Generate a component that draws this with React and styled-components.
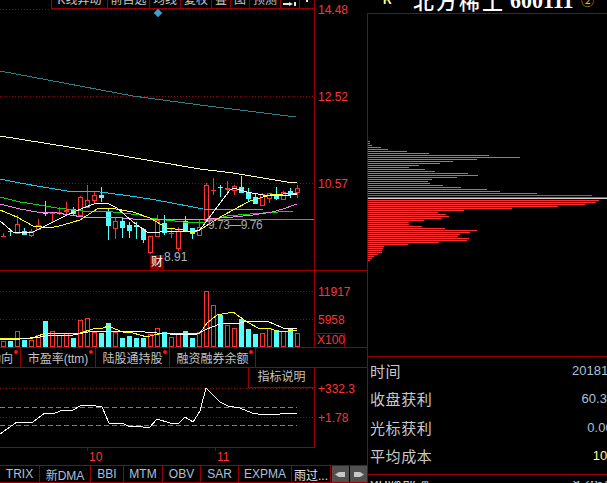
import React from 'react'
import styled, { createGlobalStyle } from 'styled-components'

const LINE = '#990000'
const RED = '#ff3232'
const CYAN = '#54ffff'
const SANS = `"Liberation Sans", "Noto Sans CJK SC", sans-serif`

const GlobalStyle = createGlobalStyle`
  html, body {
    margin: 0;
    background: #000;
    overflow: hidden;
  }
`

const Screen = styled.div`
  display: flex;
  width: 607px;
  height: 483px;
  background: #000;
  overflow: hidden;
  font-family: ${SANS};
`

const LeftColumn = styled.div`
  display: flex;
  flex-direction: column;
  flex: none;
  width: 367px;
`

const PriceRow = styled.div`
  display: flex;
  flex: none;
  height: 271px;
  border-bottom: 1px solid ${LINE};
  box-sizing: border-box;
`

const VolumeRow = styled.div`
  display: flex;
  flex: none;
  height: 77px;
  border-bottom: 1px solid ${LINE};
  box-sizing: border-box;
`

const IndicatorRow = styled.div`
  display: flex;
  flex: none;
  height: 80px;
`

const ChartColumn = styled.div`
  position: relative;
  flex: none;
  width: 315px;
  border-right: 1px solid ${LINE};
  box-sizing: border-box;
  ${(p) => p.$closed && `border-bottom: 1px solid ${LINE};`}
`

const Chart = styled.svg`
  display: block;
`

const Toolbar = styled.div`
  display: flex;
  width: 263px;
  height: 9px;
  margin-left: 51px;
  border-left: 1px solid ${LINE};
  border-bottom: 1px solid ${LINE};
  box-sizing: border-box;
`

const ToolItem = styled.div`
  display: flex;
  align-items: flex-end;
  justify-content: center;
  flex: none;
  width: ${(p) => p.$w}px;
  padding-bottom: 1px;
  border-right: 1px solid ${LINE};
  box-sizing: border-box;
  overflow: hidden;
  color: #c8c8c8;
  font-size: 12px;
  line-height: 14px;
  white-space: nowrap;
`

const Axis = styled.div`
  display: flex;
  flex-direction: column;
  flex: 1;
  padding: ${(p) => p.$top}px 0 0 3px;
`

const AxisLabel = styled.div`
  flex: none;
  height: ${(p) => p.$h}px;
  color: ${RED};
  font-size: 12px;
  line-height: 14px;
`

const ScaleBox = styled.div`
  width: 29px;
  height: 14px;
  margin: auto 0 0 -2px;
  border-top: 1px solid ${LINE};
  border-right: 1px solid ${LINE};
  box-sizing: border-box;
  color: ${RED};
  font-size: 12px;
  line-height: 13px;
  padding-left: 1px;
`

const Diamond = styled.div`
  position: absolute;
  left: 155px;
  top: 10px;
  width: 6px;
  height: 6px;
  background: #3ea0d0;
  transform: rotate(45deg);
`

const Note = styled.div`
  position: absolute;
  left: ${(p) => p.$x}px;
  top: ${(p) => p.$y}px;
  color: ${(p) => p.$color};
  font-size: 12px;
  line-height: 14px;
  letter-spacing: ${(p) => p.$spacing || 0}px;
  white-space: nowrap;
`

const FinanceBadge = styled.div`
  position: absolute;
  left: 150px;
  top: 255px;
  width: 14px;
  height: 14px;
  background: #800000;
  color: #fff;
  font-size: 12px;
  line-height: 14px;
  text-align: center;
`

const IndexTabs = styled.div`
  display: flex;
  flex: none;
  height: 20px;
  border-bottom: 1px solid ${LINE};
  box-sizing: border-box;
`

const IndexTab = styled.div`
  position: relative;
  display: flex;
  align-items: center;
  justify-content: ${(p) => (p.$cut ? 'flex-end' : 'center')};
  flex: none;
  width: ${(p) => p.$w}px;
  padding-right: ${(p) => (p.$cut ? 7 : 0)}px;
  border-right: 1px solid ${LINE};
  box-sizing: border-box;
  overflow: hidden;
  color: #c4c4c4;
  font-size: 12px;
  white-space: nowrap;

  &::after {
    content: '';
    position: absolute;
    top: 2px;
    right: 2px;
    width: 4px;
    height: 4px;
    border-radius: 50%;
    background: #ff1010;
  }
`

const ExplainButton = styled.div`
  position: absolute;
  right: 0;
  top: 0;
  width: 66px;
  height: 20px;
  border-left: 1px solid ${LINE};
  border-bottom: 1px solid ${LINE};
  box-sizing: border-box;
  color: #c4c4c4;
  font-size: 12px;
  line-height: 19px;
  text-align: center;
  background: #000;
`

const DateRow = styled.div`
  display: flex;
  flex: none;
  height: 17px;
  padding-left: 87px;
`

const DateTick = styled.div`
  flex: none;
  width: ${(p) => p.$w}px;
  padding: 2px 0 0 2px;
  color: ${RED};
  font-size: 12px;
  line-height: 14px;
  position: relative;

  &::before {
    content: '';
    position: absolute;
    left: 0;
    top: 0;
    width: 1px;
    height: 3px;
    background: ${LINE};
  }
`

const BottomTabs = styled.div`
  display: flex;
  flex: none;
  height: 18px;
  border-top: 1px solid ${LINE};
  border-bottom: 1px solid ${LINE};
  box-sizing: border-box;
`

const BottomTab = styled.div`
  display: flex;
  align-items: center;
  justify-content: center;
  flex: none;
  width: ${(p) => p.$w}px;
  border-right: 1px solid ${LINE};
  box-sizing: border-box;
  color: ${(p) => (p.$active ? '#e0e0e0' : '#acc0d8')};
  font-size: 12px;
  white-space: nowrap;
`

const ScrollButton = styled.div`
  display: flex;
  align-items: center;
  justify-content: center;
  flex: none;
  width: 17px;
  height: 16px;
  margin-left: 1px;
  background: #505050;
`

const RightColumn = styled.div`
  display: flex;
  flex-direction: column;
  flex: 1;
  min-width: 0;
`

const Header = styled.div`
  display: flex;
  align-items: flex-start;
  flex: none;
  height: 14px;
  padding-left: 16px;
  border-bottom: 1px solid ${LINE};
  box-sizing: border-box;
  overflow: hidden;
  white-space: nowrap;
`

const Mark = styled.span`
  flex: none;
  width: 30px;
  margin-top: -7px;
  color: #ffff99;
  font-size: 12px;
  font-weight: bold;
  line-height: 14px;
`

const StockName = styled.span`
  flex: none;
  width: 97px;
  margin-top: -14px;
  color: #fff;
  font-family: "Noto Sans CJK SC", sans-serif;
  font-size: 21px;
  font-weight: 500;
  letter-spacing: 2px;
  line-height: 28px;
`

const StockCode = styled.span`
  flex: none;
  width: 71px;
  margin-top: -13px;
  color: #fff;
  font-family: "Liberation Serif", serif;
  font-size: 22px;
  font-weight: bold;
  line-height: 28px;
`

const Circled = styled.span`
  flex: none;
  margin-top: -7px;
  color: #ffb000;
  font-family: "Noto Sans CJK SC", sans-serif;
  font-size: 13px;
  line-height: 14px;
`

const SidePanel = styled.div`
  display: flex;
  flex-direction: column;
  flex: 1;
  min-height: 0;
  border-left: 1px solid ${LINE};
`

const ProfileArea = styled.div`
  flex: none;
  height: 343px;
  border-bottom: 1px solid ${LINE};
  box-sizing: border-box;
`

const StatsTable = styled.div`
  flex: none;
  height: 118px;
  margin-bottom: 6px;
  border-bottom: 1px solid ${LINE};
  box-sizing: border-box;
`

const StatRow = styled.div`
  display: flex;
  align-items: center;
  justify-content: space-between;
  height: 28.5px;
  padding: 0 0 2px 2px;
  box-sizing: border-box;
  overflow: hidden;
`

const StatLabel = styled.span`
  color: #c8c8c8;
  font-size: 15px;
  letter-spacing: 0.6px;
  white-space: nowrap;
`

const StatValue = styled.span`
  flex: none;
  width: 58px;
  margin-right: -22px;
  color: ${(p) => p.$color || '#a9c0dc'};
  font-size: 13px;
  text-align: center;
  white-space: nowrap;
`

// x, wick top, wick bottom, body top, body bottom, rising
const candles = [
  [3, 233, 237, 236, 237, 1], [10, 229, 236, 231, 232, 0], [17, 215, 233, 224, 233, 1],
  [24, 228, 235, 231, 235, 0], [31, 229, 237, 231, 235, 1], [38, 219, 230, 225, 229, 1],
  [45, 201, 216, 212, 214, 0], [52, 212, 223, 213, 214, 1], [59, 207, 215, 212, 213, 1],
  [66, 202, 215, 210, 212, 1], [73, 207, 215, 209, 214, 0], [80, 196, 216, 197, 215, 1],
  [87, 185, 208, 200, 207, 1], [94, 192, 203, 195, 200, 1], [101, 187, 202, 195, 198, 0],
  [108, 208, 240, 212, 226, 0], [115, 218, 239, 221, 228, 1], [122, 218, 238, 221, 228, 0],
  [129, 222, 238, 225, 231, 0], [136, 222, 239, 225, 227, 0], [143, 228, 243, 229, 240, 0],
  [150, 236, 254, 236, 252, 1], [157, 215, 236, 220, 236, 1], [164, 215, 235, 223, 233, 0],
  [171, 228, 238, 233, 234, 1], [178, 227, 251, 231, 248, 1], [185, 216, 232, 221, 231, 0],
  [192, 228, 239, 228, 234, 0], [199, 219, 236, 227, 235, 1], [206, 183, 222, 185, 220, 1],
  [213, 178, 195, 190, 191, 1], [220, 185, 197, 187, 188, 0], [227, 181, 195, 188, 190, 1],
  [234, 185, 195, 186, 190, 1], [241, 176, 193, 187, 193, 0], [248, 188, 201, 192, 199, 0],
  [255, 193, 204, 197, 204, 0], [262, 193, 205, 194, 205, 1], [269, 193, 203, 193, 198, 1],
  [276, 187, 200, 196, 199, 0], [283, 191, 200, 192, 199, 1], [290, 188, 198, 191, 195, 0],
  [297, 185, 198, 188, 192, 1],
]

const priceLines = [
  { color: '#2f8088', points: '0,71 133,96 200,105 296,117' },
  { color: '#ffffc0', points: '0,136 100,152 200,169 233,173 287,182 297,183' },
  { color: '#10c8f0', points: '0,179 20,183 43,187 67,191 100,192 123,195 150,199 167,202 203,209 263,210 297,210' },
  { color: '#10d010', points: '0,197 20,202 33,204 57,208 83,211 113,212 140,215 150,218 183,222 205,222 227,216 250,214 263,213 293,211' },
  { color: '#f080f0', points: '0,204 20,209 37,212 57,213 83,217 113,217 133,219 160,219 183,219 207,219 233,217 253,215 272,212 283,209 297,204' },
  { color: '#ffff20', points: '0,210 17,217 33,226 50,228 63,225 80,220 97,209 110,208 133,212 147,217 150,218 167,228 183,230 193,233 203,228 217,219 233,210 250,201 270,195 297,193' },
  { color: '#ffffff', points: '0,221 13,232 20,233 33,232 47,225 57,220 67,215 83,208 97,203 107,203 117,208 133,222 147,232 160,232 170,231 190,232 200,230 230,190 234,188 247,192 263,195 283,196 297,194' },
]

// x, top of the bar, rising
const volumes = [
  [3, 341, 1], [10, 341, 0], [17, 331, 1], [24, 340, 0], [31, 340, 1], [38, 335, 1], [45, 321, 0],
  [52, 331, 1], [59, 335, 1], [66, 333, 1], [73, 338, 0], [80, 320, 1], [87, 318, 1], [94, 332, 1],
  [101, 333, 0], [108, 323, 0], [115, 332, 1], [122, 338, 0], [129, 336, 0], [136, 338, 0], [143, 338, 0],
  [150, 334, 1], [157, 328, 1], [164, 332, 0], [171, 337, 1], [178, 333, 1], [185, 331, 0], [192, 338, 0],
  [199, 332, 1], [206, 291, 1], [213, 305, 1], [220, 315, 0], [227, 325, 1], [234, 328, 1], [241, 319, 0],
  [248, 329, 0], [255, 334, 0], [262, 333, 1], [269, 328, 1], [276, 330, 0], [283, 331, 1], [290, 328, 0],
  [297, 333, 1],
]

const volumeYellow = '0,339 33,338 43,334 63,333 80,333 93,329 103,328 108,326 115,329 123,332 133,333 147,337 150,336 163,333 183,334 200,333 207,323 217,315 233,312 247,322 260,329 268,328 280,332 297,330'
const volumeWhite = '0,339 20,339 40,337 50,335 73,335 93,331 133,331 157,333 170,334 197,334 207,329 220,324 240,323 247,321 267,321 283,328 297,329'
const indicatorLine = '0,434 7,429 17,422 23,423 33,422 45,413 53,414 60,411 73,410 80,406 90,405 102,407 109,423 122,423 130,427 137,426 143,427 150,427 157,419 170,423 178,424 185,417 193,422 200,411 206,388 213,395 220,402 228,406 240,408 252,413 258,414 280,414 297,413'

// right end of each bar, one bar every two pixels
const profileBlue = [370, 370, 372, 381, 388, 407, 429, 489, 520, 477, 453, 440, 419, 409, 425, 435, 468, 478, 457, 432, 428, 430, 443, 461, 487, 500, 537]
const profileRed = [599, 596, 585, 558, 512, 464, 438, 446, 449, 441, 424, 409, 409, 422, 445, 477, 470, 460, 458, 469, 467, 439, 408, 384, 383, 382, 382, 378, 374, 372, 370]

function GridLine({ y, x2 = 314 }) {
  return <line x1="0" x2={x2} y1={y + 0.5} y2={y + 0.5} stroke="#a00000" strokeDasharray="1 2" />
}

function Candle({ x, top, bottom, bodyTop, bodyBottom, rising }) {
  const color = rising ? RED : CYAN
  const solid = bodyBottom - bodyTop < 3
  return (
    <g>
      <line x1={x + 0.5} x2={x + 0.5} y1={top} y2={bottom} stroke={color} />
      {rising && !solid ? (
        <rect x={x - 1.5} y={bodyTop + 0.5} width="4" height={bodyBottom - bodyTop} fill="#000" stroke={color} />
      ) : (
        <rect x={x - 2} y={bodyTop} width="5" height={Math.max(bodyBottom - bodyTop, 1)} fill={color} />
      )}
    </g>
  )
}

function PriceChart() {
  return (
    <Chart width="314" height="261" viewBox="0 9 314 261" shapeRendering="crispEdges">
      <GridLine y={9} />
      <GridLine y={96} />
      <GridLine y={183} />
      <line x1="206" x2="314" y1="219.5" y2="219.5" stroke="#808080" />
      {candles.map(([x, top, bottom, bodyTop, bodyBottom, rising]) => (
        <Candle key={x} x={x} top={top} bottom={bottom} bodyTop={bodyTop} bodyBottom={bodyBottom} rising={rising} />
      ))}
      {priceLines.map((item) => (
        <polyline key={item.color} points={item.points} fill="none" stroke={item.color} />
      ))}
    </Chart>
  )
}

function VolumeChart() {
  return (
    <Chart width="314" height="76" viewBox="0 271 314 76" shapeRendering="crispEdges">
      <GridLine y={291} />
      <GridLine y={319} />
      {volumes.map(([x, top, rising]) =>
        rising ? (
          <rect key={x} x={x - 1.5} y={top + 0.5} width="4" height={346 - top} fill="#000" stroke={RED} />
        ) : (
          <rect key={x} x={x - 2} y={top} width="5" height={347 - top} fill={CYAN} />
        )
      )}
      <polyline points={volumeYellow} fill="none" stroke="#ffff20" />
      <polyline points={volumeWhite} fill="none" stroke="#fff" />
    </Chart>
  )
}

function IndicatorChart() {
  return (
    <Chart width="314" height="79" viewBox="0 368 314 79" shapeRendering="crispEdges">
      <GridLine y={388} />
      <GridLine y={417} />
      <line x1="0" x2="297" y1="407.5" y2="407.5" stroke="#808080" strokeDasharray="5 3" />
      <line x1="0" x2="297" y1="425.5" y2="425.5" stroke="#808080" strokeDasharray="5 3" />
      <polyline points={indicatorLine} fill="none" stroke="#fff" />
    </Chart>
  )
}

function ProfileChart() {
  return (
    <Chart width="239" height="342" viewBox="368 14 239 342" shapeRendering="crispEdges">
      {profileBlue.map((end, i) => (
        <rect key={i} x="368" y={141 + i * 2} width={end - 368} height="1" fill="#3a9ac8" />
      ))}
      <rect x="368" y="195" width="224" height="1" fill="#ff2d2d" />
      <rect x="368" y="197" width="239" height="1" fill="#ff3232" />
      <rect x="368" y="198" width="239" height="1" fill="#d0d0d0" />
      {profileRed.map((end, i) => (
        <rect key={i} x="368" y={200 + i * 2} width={end - 368} height="1" fill="#ff2d2d" />
      ))}
    </Chart>
  )
}

function ArrowIcon({ flip }) {
  return (
    <svg width="11" height="7" viewBox="0 0 11 7" style={flip ? { transform: 'scaleX(-1)' } : undefined}>
      <path d="M0 3.5 L4 1 H10 V6 H4 Z" fill="#c8c8c8" />
    </svg>
  )
}

const toolItems = [
  ['K线异动', 56], ['前自选', 42], ['均线', 31], ['复权', 31], ['叠', 19], ['图', 19], ['预测', 31],
]
const indexTabs = [['主力动向', 21], ['市盈率(ttm)', 75], ['陆股通持股', 74], ['融资融券余额', 86]]
const bottomTabs = [['TRIX', 40], ['新DMA', 51], ['BBI', 33], ['MTM', 39], ['OBV', 38], ['SAR', 38], ['EXPMA', 53]]
const stats = [
  ['时间', '20181116'],
  ['收盘获利', '60.3%'],
  ['光标获利', '0.00'],
  ['平均成本', '10', '#ffff99'],
]

export default function App() {
  return (
    <Screen>
      <GlobalStyle />
      <LeftColumn>
        <PriceRow>
          <ChartColumn>
            <Toolbar>
              {toolItems.map(([label, w]) => (
                <ToolItem key={label} $w={w}>{label}</ToolItem>
              ))}
              <ToolItem $w={19}>
                <svg width="14" height="5" viewBox="0 0 14 5">
                  <path d="M0 1 H6 V0 L10 2 L6 4 V3 H0 Z M11 0 H13 V4 H11 Z" fill="#e8e8e8" />
                </svg>
              </ToolItem>
              <ToolItem $w={15}>
                <svg width="6" height="7" viewBox="0 0 6 7">
                  <rect x="2" y="0" width="2" height="2" fill="#e8e8e8" />
                </svg>
              </ToolItem>
            </Toolbar>
            <Diamond />
            <PriceChart />
            <Note $x={208} $y={218} $color="#a8a8a8" $spacing={-0.5}>9.73—9.76</Note>
            <FinanceBadge>财</FinanceBadge>
            <Note $x={164} $y={250} $color="#a8b8c8">8.91</Note>
          </ChartColumn>
          <Axis $top={3}>
            <AxisLabel $h={87}>14.48</AxisLabel>
            <AxisLabel $h={87}>12.52</AxisLabel>
            <AxisLabel $h={87}>10.57</AxisLabel>
          </Axis>
        </PriceRow>

        <VolumeRow>
          <ChartColumn>
            <VolumeChart />
          </ChartColumn>
          <Axis $top={14}>
            <AxisLabel $h={28}>11917</AxisLabel>
            <AxisLabel $h={14}>5958</AxisLabel>
            <ScaleBox>X100</ScaleBox>
          </Axis>
        </VolumeRow>

        <IndexTabs>
          {indexTabs.map(([label, w], i) => (
            <IndexTab key={label} $w={w} $cut={i === 0}>{label}</IndexTab>
          ))}
        </IndexTabs>

        <IndicatorRow>
          <ChartColumn $closed>
            <IndicatorChart />
            <ExplainButton>指标说明</ExplainButton>
          </ChartColumn>
          <Axis $top={14}>
            <AxisLabel $h={29}>+332.3</AxisLabel>
            <AxisLabel $h={29}>+1.78</AxisLabel>
          </Axis>
        </IndicatorRow>

        <DateRow>
          <DateTick $w={126}>10</DateTick>
          <DateTick $w={60}>11</DateTick>
        </DateRow>

        <BottomTabs>
          {bottomTabs.map(([label, w]) => (
            <BottomTab key={label} $w={w}>{label}</BottomTab>
          ))}
          <BottomTab $w={39} $active>雨过...</BottomTab>
          <ScrollButton><ArrowIcon /></ScrollButton>
          <ScrollButton><ArrowIcon flip /></ScrollButton>
        </BottomTabs>
      </LeftColumn>

      <RightColumn>
        <Header>
          <Mark>R</Mark>
          <StockName>北方稀土</StockName>
          <StockCode>600111</StockCode>
          <Circled>②</Circled>
        </Header>
        <SidePanel>
          <ProfileArea>
            <ProfileChart />
          </ProfileArea>
          <StatsTable>
            {stats.map(([label, value, color]) => (
              <StatRow key={label}>
                <StatLabel>{label}</StatLabel>
                <StatValue $color={color}>{value}</StatValue>
              </StatRow>
            ))}
          </StatsTable>
          <StatRow>
            <StatLabel>90%成本</StatLabel>
            <StatValue>9.26-12.3</StatValue>
          </StatRow>
        </SidePanel>
      </RightColumn>
    </Screen>
  )
}
